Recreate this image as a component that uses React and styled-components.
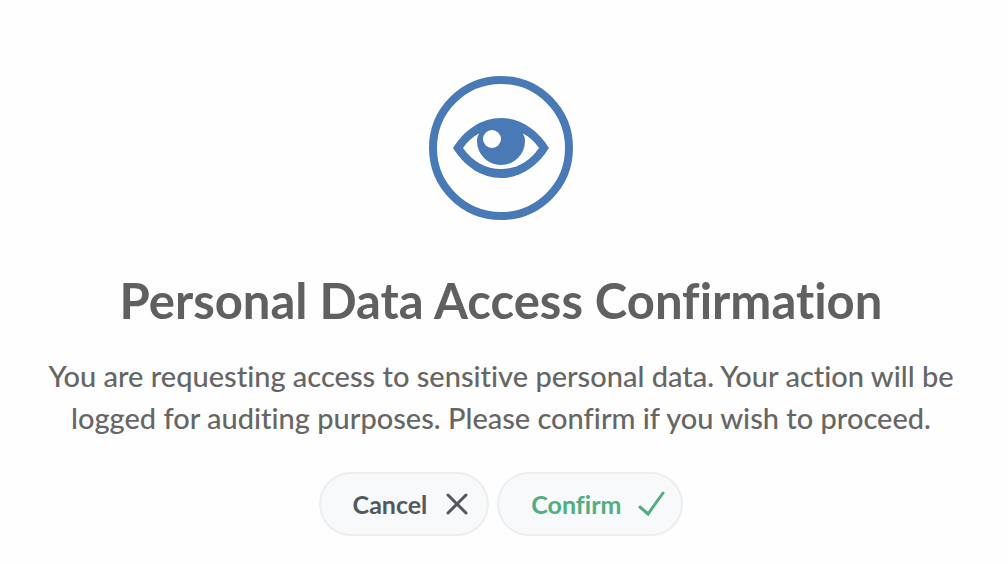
import React from 'react';
import styled, { createGlobalStyle } from 'styled-components';

const GlobalStyle = createGlobalStyle`
  * {
    box-sizing: border-box;
  }
  body {
    margin: 0;
    background: #fefefe;
    font-family: Lato, sans-serif;
    font-variant-ligatures: none;
  }
`

const Dialog = styled.main`
  display: flex;
  flex-direction: column;
  align-items: center;
  padding: 76px 30px 28px 24px;
  text-align: center;
`

const EyeIcon = styled.svg`
  display: block;
  width: 144px;
  height: 144px;
`

const Title = styled.h1`
  margin: 50px 0 0;
  color: #606060;
  font-size: 49px;
  font-weight: 700;
  line-height: 60px;
`

const Message = styled.p`
  max-width: 940px;
  margin: 25px 0 0;
  color: #666666;
  font-size: 29px;
  font-weight: 500;
  line-height: 42px;
`

const Actions = styled.div`
  display: flex;
  gap: 8px;
  margin-top: 33px;
`

const Button = styled.button`
  display: flex;
  align-items: center;
  gap: 16px;
  height: 64px;
  padding: 0 16px 0 32px;
  border: 2px solid #eceef0;
  border-radius: 32px;
  background: #f7f9fb;
  color: ${(props) => props.$color};
  font-family: inherit;
  font-size: 25px;
  font-weight: 700;
  font-variant-ligatures: inherit;
  cursor: pointer;

  svg {
    display: block;
    width: 28px;
    height: 28px;
    fill: none;
    stroke: currentColor;
    stroke-width: 3;
    stroke-linecap: round;
  }
`

export default function App() {
  return (
    <>
      <GlobalStyle />
      <Dialog>
        <EyeIcon viewBox="0 0 144 144" aria-hidden="true">
          <circle cx="72" cy="72" r="68" fill="none" stroke="#4a7ab5" strokeWidth="8" />
          <path
            d="M24 72C36 53 53 42 72 42S108 53 120 72C108 91 91 102 72 102S36 91 24 72Z"
            fill="#4a7ab5"
          />
          <path
            d="M34 72C38 66 43 61.500 50 57.500L94 57.500C101 61.500 106 66 110 72C100 86 87 93 72 93S44 86 34 72Z"
            fill="#fefefe"
          />
          <path d="M50 50H94V58C95.500 60 96 62.500 96 65A24 24 0 0 1 48 65C48 62.500 48.500 60 50 58Z" fill="#4a7ab5" />
          <circle cx="63" cy="63" r="9" fill="#fefefe" />
        </EyeIcon>

        <Title>Personal Data Access Confirmation</Title>
        <Message>
          You are requesting access to sensitive personal data. Your action will be logged for
          auditing purposes. Please confirm if you wish to proceed.
        </Message>

        <Actions>
          <Button type="button" $color="#54585d">
            Cancel
            <svg viewBox="0 0 28 28" aria-hidden="true">
              <path d="M5 5L23 23M23 5L5 23" />
            </svg>
          </Button>
          <Button type="button" $color="#52ad80">
            Confirm
            <svg viewBox="0 0 28 28" aria-hidden="true">
              <path d="M3 17L11 24L26 3" />
            </svg>
          </Button>
        </Actions>
      </Dialog>
    </>
  )
}
